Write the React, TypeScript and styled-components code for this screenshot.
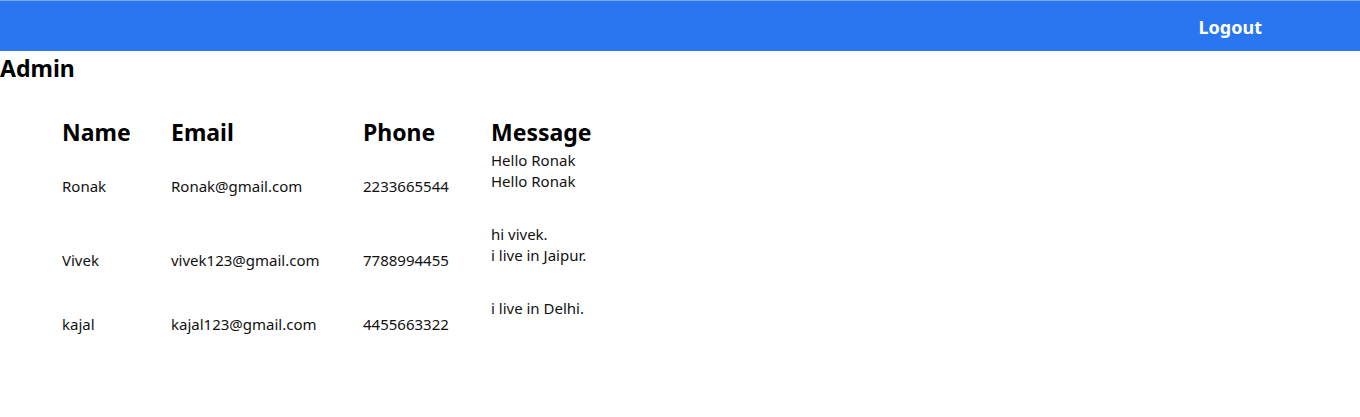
import React from "react";
import styled, { createGlobalStyle } from "styled-components";

const Global = createGlobalStyle`
  html, body { margin: 0; padding: 0; background: #fff; }
  body { font-family: "Noto Sans", "Open Sans", sans-serif; font-size: 15px; color: #111; }
`;

const Navbar = styled.nav`
  height: 50px;
  border-top: 1px solid #7ea8f2;
  background: #2a75f0;
  display: flex;
  align-items: center;
  justify-content: flex-end;
  padding-right: 98px;
`;

const LogoutButton = styled.button`
  background: transparent;
  border: none;
  color: #fff;
  font-family: "Noto Sans", sans-serif;
  font-weight: 700;
  font-size: 18px;
  line-height: 24px;
  cursor: pointer;
  padding: 2px 0 0;
`;

const Title = styled.h2`
  margin: 2px 0 0;
  font-size: 23px;
  line-height: 30px;
  font-weight: 700;
  color: #000;
`;

const Table = styled.table`
  margin: 33px 0 0 62px;
  border-collapse: separate;
  border-spacing: 0 1px;
`;

const HeadCell = styled.th`
  text-align: left;
  font-size: 23px;
  font-weight: 700;
  color: #000;
  padding: 0 0 2px 0;
  line-height: 30px;
  vertical-align: top;
`;

const Cell = styled.td<{ $w?: number }>`
  padding: 0;
  vertical-align: middle;
  line-height: 21px;
  width: ${(p) => (p.$w ? `${p.$w}px` : "auto")};
`;

const MessageCell = styled.td`
  padding: 0 0 31px;
  vertical-align: top;
  line-height: 21px;
  white-space: pre-line;
`;

const rows = [
  { name: "Ronak", email: "Ronak@gmail.com", phone: "2233665544", message: "Hello Ronak\nHello Ronak" },
  { name: "Vivek", email: "vivek123@gmail.com", phone: "7788994455", message: "hi vivek.\ni live in Jaipur." },
  { name: "kajal", email: "kajal123@gmail.com", phone: "4455663322", message: "i live in Delhi." },
];

export default function App() {
  return (
    <>
      <Global />
      <Navbar>
        <LogoutButton>Logout</LogoutButton>
      </Navbar>
      <Title>Admin</Title>
      <Table>
        <thead>
          <tr>
            <HeadCell>Name</HeadCell>
            <HeadCell>Email</HeadCell>
            <HeadCell>Phone</HeadCell>
            <HeadCell>Message</HeadCell>
          </tr>
        </thead>
        <tbody>
          {rows.map((r) => (
            <tr key={r.name}>
              <Cell $w={109}>{r.name}</Cell>
              <Cell $w={192}>{r.email}</Cell>
              <Cell $w={128}>{r.phone}</Cell>
              <MessageCell>{r.message}</MessageCell>
            </tr>
          ))}
        </tbody>
      </Table>
    </>
  );
}
